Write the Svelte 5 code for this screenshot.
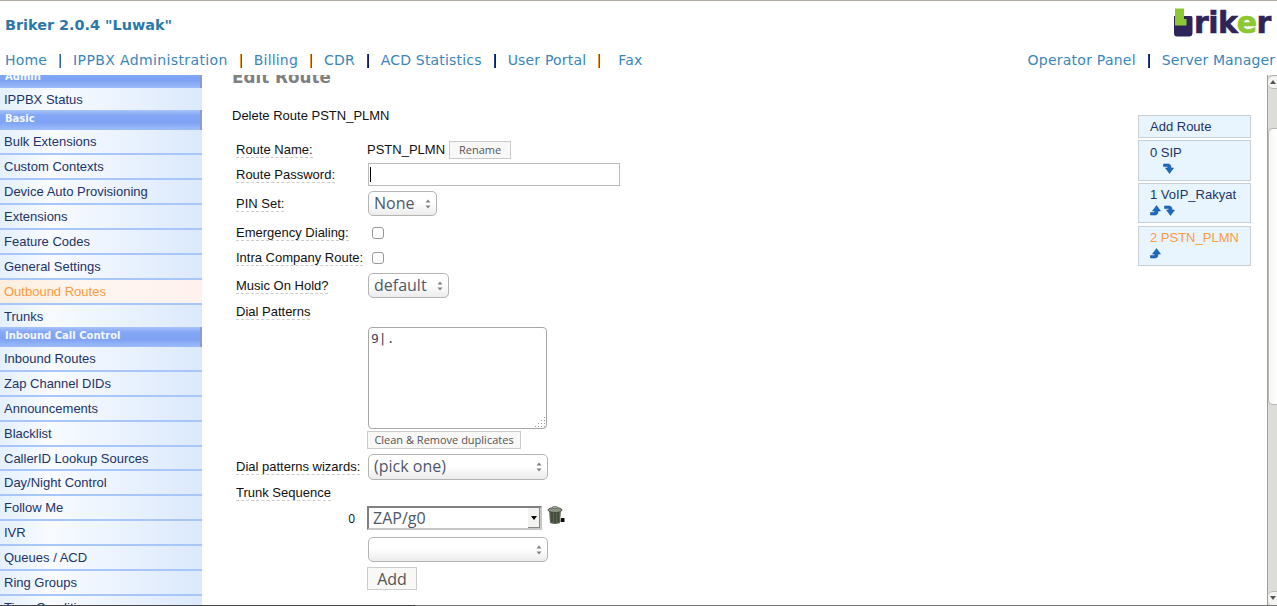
<script lang="ts">
  const topNav = [
    { label: "Home", sep: "orange" },
    { label: "IPPBX Administration", sep: "orange" },
    { label: "Billing", sep: "orange" },
    { label: "CDR", sep: "navy" },
    { label: "ACD Statistics", sep: "navy" },
    { label: "User Portal", sep: "orange" },
    { label: "Fax", sep: "" }
  ];

  const menu = [
    { head: "Admin", items: ["IPPBX Status"] },
    {
      head: "Basic",
      items: [
        "Bulk Extensions", "Custom Contexts", "Device Auto Provisioning", "Extensions",
        "Feature Codes", "General Settings", "Outbound Routes", "Trunks"
      ]
    },
    {
      head: "Inbound Call Control",
      items: [
        "Inbound Routes", "Zap Channel DIDs", "Announcements", "Blacklist",
        "CallerID Lookup Sources", "Day/Night Control", "Follow Me", "IVR",
        "Queues / ACD", "Ring Groups", "Time Conditions"
      ]
    }
  ];

  const routes = [
    { name: "0 SIP", up: false, down: true },
    { name: "1 VoIP_Rakyat", up: true, down: true },
    { name: "2 PSTN_PLMN", up: true, down: false, active: true }
  ];

  const gripDots = [[9, 0], [6, 3], [9, 3], [3, 6], [6, 6], [9, 6], [0, 9], [3, 9], [6, 9], [9, 9]];
</script>

{#snippet updown()}
  <svg class="updown" width="8" height="14" viewBox="0 0 8 14">
    <path d="M4 2.500 L6.500 5.500 H1.500 Z" fill="#808080" />
    <path d="M4 11.500 L6.500 8.500 H1.500 Z" fill="#808080" />
  </svg>
{/snippet}

{#snippet hook(flip: boolean)}
  <svg class:flip width="11" height="11" viewBox="0 0 11 11">
    <path d="M0.500 1 H5 C7.500 1 8 2.500 8 5 H10.500 L6.500 10.500 L2.500 5 H4.800 C4.800 4 4.500 3.600 3.500 3.600 H0.500 Z" fill="#1a6cc0" stroke="#0e4a90" stroke-width="0.5" />
  </svg>
{/snippet}

<div class="page">
  <header>
    <div class="title-row">
      <h1>Briker 2.0.4 "Luwak"</h1>
      <div class="logo">
        <svg width="20" height="29" viewBox="0 0 20 29">
          <path d="M1 8 H18 Q19.500 8 19.500 10 V25 Q19.500 28.500 16 28.500 H4 Q1 28.500 1 25 Z" fill="#2e2458" />
          <rect x="2" y="0.500" width="9" height="17" fill="#8cc832" />
          <rect x="11" y="11" width="2.500" height="6.500" fill="#8cc832" />
        </svg>
        <span class="logo-text">ri<span>k</span><em>e</em>r</span>
      </div>
    </div>
    <nav>
      <div class="nav-group">
        {#each topNav as link}
          <span
            class="nav-link"
            class:fax={link.label === "Fax"}
            class:wide={link.label === "IPPBX Administration"}
          >{link.label}</span>
          {#if link.sep}<i class="sep {link.sep}"></i>{/if}
        {/each}
      </div>
      <div class="nav-group">
        <span class="nav-link operator">Operator Panel</span>
        <i class="sep navy"></i>
        <span class="nav-link tight">Server Manager</span>
      </div>
    </nav>
  </header>

  <div class="body">
    <aside class="sidebar">
      <div class="menu">
        {#each menu as group}
          <div class="menu-head">{group.head}</div>
          {#each group.items as item, i}
            <div
              class="menu-item"
              class:active={item === "Outbound Routes"}
              class:last={i === group.items.length - 1 && group.head !== "Inbound Call Control"}
            >{item}</div>
          {/each}
        {/each}
      </div>
    </aside>

    <main>
      <div class="content">
        <h2>Edit Route</h2>
        <p class="delete">Delete Route PSTN_PLMN</p>

        <div class="row h25">
          <span class="cell"><span class="lbl">Route Name:</span></span>
          <span class="route-name">PSTN_PLMN</span>
          <button class="btn small">Rename</button>
        </div>
        <div class="row h25">
          <span class="cell"><span class="lbl">Route Password:</span></span>
          <div class="password"><i class="caret"></i></div>
        </div>
        <div class="row h33">
          <span class="cell"><span class="lbl">PIN Set:</span></span>
          <div class="sel w69"><span>None</span>{@render updown()}</div>
        </div>
        <div class="row h25">
          <span class="cell"><span class="lbl">Emergency Dialing:</span></span>
          <span class="check"></span>
        </div>
        <div class="row h25">
          <span class="cell"><span class="lbl">Intra Company Route:</span></span>
          <span class="check"></span>
        </div>
        <div class="row h31">
          <span class="cell"><span class="lbl">Music On Hold?</span></span>
          <div class="sel w81"><span>default</span>{@render updown()}</div>
        </div>
        <div class="row h21">
          <span class="cell"><span class="lbl">Dial Patterns</span></span>
        </div>

        <div class="indent">
          <div class="patterns-wrap">
            <textarea class="patterns" spellcheck="false">9|.</textarea>
            <svg class="grip" width="11" height="11" viewBox="0 0 11 11">
              {#each gripDots as [x, y]}
                <rect {x} {y} width="1" height="1" fill="#999" />
              {/each}
            </svg>
          </div>
          <button class="btn small clean">Clean &amp; Remove duplicates</button>
        </div>

        <div class="row h31 wizards">
          <span class="cell"><span class="lbl">Dial patterns wizards:</span></span>
          <div class="sel w180 tall"><span>(pick one)</span>{@render updown()}</div>
        </div>
        <div class="row h21">
          <span class="cell"><span class="lbl">Trunk Sequence</span></span>
        </div>

        <div class="row h24 trunk">
          <span class="cell seq">0</span>
          <div class="combo">
            <span>ZAP/g0</span>
            <i class="combo-btn"></i>
          </div>
          <svg class="trash" width="18" height="19" viewBox="0 0 18 19">
            <path d="M2 4 H14 L13 17 Q8 19 3 17 Z" fill="#5c6650" />
            <path d="M5 5 V16 M8 5 V17 M11 5 V16" stroke="#2c3228" stroke-width="1" />
            <ellipse cx="8" cy="4" rx="7" ry="2.500" fill="#8c9484" stroke="#3c4238" stroke-width="0.8" />
            <rect x="5.500" y="0.500" width="5" height="2" rx="1" fill="#a8aea0" stroke="#3c4238" stroke-width="0.5" />
            <path d="M14 12 H17.500 V16 H13.500 Z" fill="#111" />
          </svg>
        </div>
        <div class="indent">
          <div class="sel w180 empty">{@render updown()}</div>
          <button class="btn add">Add</button>
        </div>
      </div>

      <div class="routes">
        <div class="route add-route">Add Route</div>
        {#each routes as r}
          <div class="route" class:current={r.active} class:first={r.name === "0 SIP"}>
            <div>{r.name}</div>
            <div class="arrows" class:down-only={!r.up}>
              {#if r.up}{@render hook(true)}{/if}
              {#if r.down}{@render hook(false)}{/if}
            </div>
          </div>
        {/each}
      </div>
    </main>

    <div class="scrollbar">
      <div class="sb-btn top"><i></i></div>
      <div class="sb-track"><div class="sb-thumb"></div></div>
      <div class="sb-btn bottom"><i></i></div>
    </div>
  </div>
  <div class="frame"></div>
</div>

<style>
  :global(body) {
    margin: 0;
    background: #fff;
    overflow: hidden;
  }

  .page {
    height: 606px;
    display: flex;
    flex-direction: column;
    overflow: hidden;
    font-family: "Liberation Sans", Arial, sans-serif;
    font-size: 13px;
    color: #111;
  }

  header {
    height: 74px;
    flex-shrink: 0;
    border-top: 1px solid #b0aca0;
    display: flex;
    flex-direction: column;
    font-family: "DejaVu Sans", sans-serif;
  }

  .title-row {
    height: 43px;
    display: flex;
    justify-content: space-between;
    padding: 7px 4px 0 5px;
    box-sizing: border-box;
  }

  h1 {
    margin: 9px 0 0;
    font-size: 14.4px;
    line-height: 16px;
    font-weight: bold;
    color: #2a78a8;
  }

  .logo {
    display: flex;
    align-items: flex-end;
    height: 29px;
    width: 100px;
  }

  .logo-text {
    font-family: "DejaVu Sans", sans-serif;
    font-weight: bold;
    font-size: 30px;
    line-height: 29px;
    height: 29px;
    color: #2e2458;
    letter-spacing: -0.5px;
    -webkit-text-stroke: 0.6px #2e2458;
    margin-left: 1px;
  }

  .logo-text em {
    font-style: normal;
    color: #8cc832;
    -webkit-text-stroke: 0.6px #8cc832;
  }

  nav {
    display: flex;
    justify-content: space-between;
    padding: 8px 2px 0 5px;
    height: 31px;
    align-items: flex-start;
    box-sizing: border-box;
  }

  .nav-group {
    display: flex;
    align-items: center;
    height: 17px;
  }

  .nav-link {
    font-size: 14px;
    line-height: 17px;
    color: #3a86bc;
    letter-spacing: 0.18px;
    white-space: nowrap;
  }

  .nav-link.wide {
    letter-spacing: 0.38px;
  }

  .nav-link.operator {
    letter-spacing: 0.25px;
  }

  .nav-link.tight {
    letter-spacing: 0.1px;
  }

  .nav-link.fax {
    margin-left: 6px;
  }

  .sep {
    width: 2px;
    height: 14px;
    margin: 0 12px;
    box-sizing: border-box;
  }

  .sep.orange {
    background: linear-gradient(90deg, #e89a30 50%, #3060a0 50%);
  }

  .sep.navy {
    background: linear-gradient(90deg, #20408c 50%, #101c70 50%);
  }

  .body {
    flex: 1;
    min-height: 0;
    display: flex;
  }

  .sidebar {
    width: 202px;
    flex-shrink: 0;
    overflow: hidden;
  }

  .menu {
    margin-top: -6.82px;
  }

  .menu-head {
    height: 20px;
    box-sizing: border-box;
    padding-left: 5px;
    font-family: "DejaVu Sans", sans-serif;
    font-size: 10px;
    font-weight: bold;
    line-height: 18.4px;
    color: #f4f8ff;
    background: linear-gradient(180deg, #a8c4fa 0, #84a8f6 25%, #7ea2f4 60%, #9cbcf8 100%);
    border-right: 2px solid #8a9cd8;
  }

  .menu-item {
    height: 24.95px;
    box-sizing: border-box;
    padding-left: 4px;
    line-height: 24px;
    color: #1c3468;
    background: linear-gradient(90deg, #e4f0fd 0, #f8fbff 25%, #dbe9fc 100%);
    border-bottom: 2px solid #a8c6fa;
    white-space: nowrap;
  }

  .menu-item.last {
    height: 22px;
    border-bottom: 0;
  }

  .menu-item.active {
    color: #ff9a3c;
    background: linear-gradient(90deg, #fdeede 0, #fff6f0 40%, #fff2ee 100%);
  }

  main {
    flex: 1;
    min-width: 0;
    display: flex;
    justify-content: space-between;
    overflow: hidden;
  }

  .content {
    padding-left: 30px;
    margin-top: -8px;
  }

  h2 {
    margin: 0;
    font-family: "DejaVu Sans", sans-serif;
    font-size: 16.8px;
    line-height: 20px;
    font-weight: bold;
    color: #808080;
  }

  .delete {
    margin: 0;
    padding: 21px 0 13px;
    line-height: 16px;
  }

  .row {
    display: flex;
    align-items: center;
  }

  .h21 { height: 21px; }
  .h24 { height: 24px; }
  .h25 { height: 25px; }
  .h31 { height: 31px; }
  .h33 { height: 33px; }

  .cell {
    width: 135px;
    flex-shrink: 0;
    padding-left: 4px;
    box-sizing: border-box;
    white-space: nowrap;
  }

  .lbl {
    display: inline-block;
    line-height: 15px;
    border-bottom: 1px dashed #ccc;
  }

  .route-name {
    margin-right: 4px;
  }

  .btn {
    font-family: "Open Sans", sans-serif;
    background: #f8f8f6;
    border: 1px solid #ccc;
    color: #555;
    padding: 0 0 2px;
    box-sizing: border-box;
  }

  .btn.small {
    font-size: 11px;
    height: 18px;
    width: 62px;
  }

  .btn.clean {
    display: block;
    width: 154px;
    margin-top: 2px;
  }

  .btn.add {
    display: block;
    width: 50px;
    height: 23px;
    margin-top: 5px;
    font-size: 16px;
  }

  .password {
    width: 252px;
    height: 23px;
    margin-left: 1px;
    border: 1px solid #bbb;
    box-sizing: border-box;
    display: flex;
    align-items: center;
    padding-left: 1px;
  }

  .caret {
    width: 1px;
    height: 15px;
    background: #000;
  }

  .sel {
    position: relative;
    height: 25px;
    box-sizing: border-box;
    margin-left: 1px;
    padding-left: 5px;
    border: 1px solid #b4b4b4;
    border-radius: 5px;
    background: linear-gradient(180deg, #fff 0, #fff 45%, #ececec 100%);
    font-family: "Open Sans", sans-serif;
    font-size: 16px;
    line-height: 23px;
    color: #4e5868;
    white-space: nowrap;
  }

  .sel.tall {
    height: 26px;
  }

  .w69 { width: 69px; }
  .w81 { width: 81px; }
  .w180 { width: 180px; }

  .updown {
    position: absolute;
    right: 4px;
    top: 5px;
  }

  .check {
    width: 10px;
    height: 10px;
    margin-left: 5px;
    border: 1px solid #999;
    border-radius: 3px;
    background: #fff;
  }

  .indent {
    padding-left: 135px;
  }

  .patterns-wrap {
    position: relative;
    width: 179px;
    margin: 5px 0 0 1px;
  }

  .patterns {
    display: block;
    width: 179px;
    height: 102px;
    padding: 3px 2px;
    box-sizing: border-box;
    border: 1px solid #a8a8a8;
    border-radius: 4px;
    outline: none;
    resize: none;
    font-family: "DejaVu Sans Mono", monospace;
    font-size: 13px;
    line-height: 15px;
    color: #445;
  }

  .grip {
    position: absolute;
    right: 1px;
    bottom: 1px;
  }

  .wizards {
    margin-top: 2px;
  }

  .trunk {
    margin-top: 3px;
    position: relative;
  }

  .seq {
    text-align: right;
    padding-right: 12px;
    font-family: "Open Sans", sans-serif;
    font-size: 12px;
  }

  .combo {
    position: relative;
    width: 175px;
    height: 24px;
    box-sizing: border-box;
    border: 2px solid;
    border-color: #808080 #c8c8c8 #c8c8c8 #808080;
    padding-left: 4px;
    font-family: "Open Sans", sans-serif;
    font-size: 16px;
    line-height: 20px;
    color: #4e5868;
  }

  .combo-btn {
    position: absolute;
    right: 0;
    bottom: 0;
    width: 11px;
    height: 19px;
    background: #f2f2f0;
    border-right: 1px solid #888;
    border-bottom: 1px solid #888;
  }

  .combo-btn::after {
    content: "";
    position: absolute;
    left: 3px;
    top: 8px;
    border: 3px solid transparent;
    border-top: 4px solid #000;
    border-bottom: 0;
  }

  .trash {
    margin-left: 5px;
    margin-top: -5px;
  }

  .empty {
    margin-top: 7px;
  }

  .routes {
    width: 113px;
    margin: 40px 16px 0 0;
    flex-shrink: 0;
    display: flex;
    flex-direction: column;
    gap: 2px;
  }

  .route {
    height: 40px;
    box-sizing: border-box;
    padding: 3px 0 0 11px;
    background: #e8f4fe;
    border: 1px solid #c8d0d6;
    color: #1c3468;
    line-height: 16px;
  }

  .route.first {
    height: 41px;
    padding-top: 4px;
  }

  .route.add-route {
    height: 23px;
    padding-top: 3px;
  }

  .route.current {
    margin-top: 1px;
    color: #ff9a3c;
  }

  .arrows {
    display: flex;
    gap: 3px;
    margin-top: 2px;
    height: 12px;
  }

  .arrows svg.flip {
    transform: scaleY(-1);
  }

  .arrows.down-only {
    padding-left: 13px;
  }

  .scrollbar {
    width: 10px;
    flex-shrink: 0;
    display: flex;
    flex-direction: column;
    box-sizing: border-box;
    border-left: 1px solid #a0a09c;
    background: #dcdcd8;
  }

  .sb-btn {
    height: 14px;
    flex-shrink: 0;
    background: #f4f4f2;
    position: relative;
    box-sizing: border-box;
  }

  .sb-btn.top {
    border-radius: 6px 0 0 5px;
    border-top: 1px solid #a8a8a4;
    border-bottom: 1px solid #b8b8b4;
  }

  .sb-btn.bottom {
    border-radius: 5px 0 0 5px;
    border-top: 1px solid #b8b8b4;
  }

  .sb-btn i {
    position: absolute;
    left: 2px;
    top: 4px;
    border: 3px solid transparent;
    border-bottom: 4px solid #555;
    border-top: 0;
  }

  .sb-btn.bottom i {
    border-bottom: 0;
    border-top: 4px solid #555;
  }

  .sb-track {
    flex: 1;
    padding-top: 39px;
  }

  .sb-thumb {
    height: 277px;
    background: linear-gradient(90deg, #f4f4f2, #fff);
    border-radius: 5px 0 0 5px;
    border: 1px solid #b8b8b4;
    border-right: 0;
    box-sizing: border-box;
  }

  .frame {
    height: 1px;
    flex-shrink: 0;
    background: linear-gradient(90deg, #444 415px, #777 415px);
  }
</style>
